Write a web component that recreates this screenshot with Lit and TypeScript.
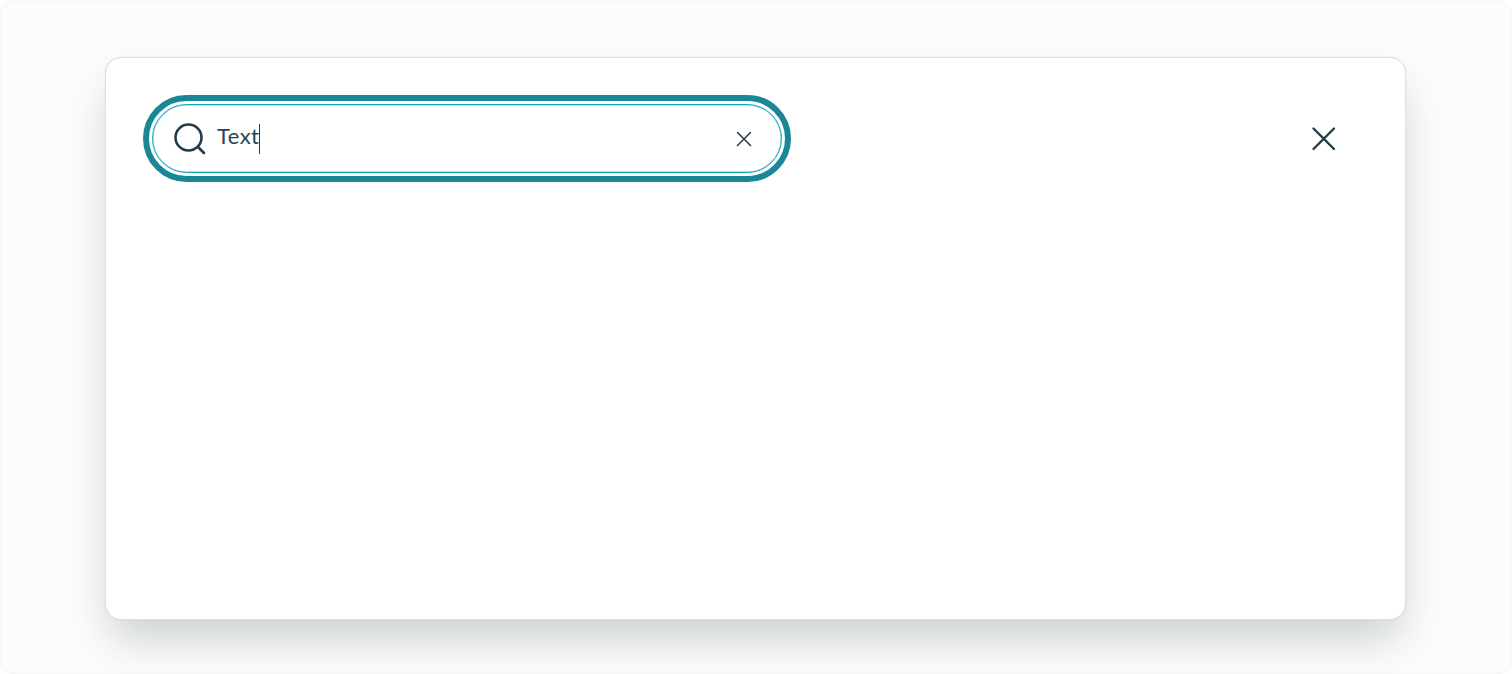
import { LitElement, html, css } from "lit";
import { customElement } from "lit/decorators.js";

@customElement("app-root")
export class AppRoot extends LitElement {
  static styles = css`
    :host { display: block; width: 1512px; height: 674px; }
    .frame {
      box-sizing: border-box; width: 1512px; height: 674px; overflow: hidden;
      background: #fcfcfc; border: 1px solid #f5f6f6; border-radius: 12px;
      padding: 56px 105px 0 104px;
    }
    .card {
      box-sizing: border-box; height: 563px; background: #fff;
      border: 1px solid #dce2e5; border-radius: 16px;
      box-shadow: 0 0 1px rgba(190, 200, 205, 0.7), 0 24px 44px -6px rgba(45, 65, 70, 0.24);
      padding: 37px 0 0 37px;
      display: flex; align-items: flex-start;
    }
    .ring {
      box-sizing: border-box; width: 648px; height: 87px; padding: 3px;
      border: 6px solid #1b8796; border-radius: 44px; background: #fff;
    }
    .field {
      box-sizing: border-box; height: 69px; border: 1px solid #0fa5bb; border-radius: 35px;
      box-shadow: inset 0 0 0 0.5px rgba(15, 165, 187, 0.6);
      display: flex; align-items: center; padding: 0 28px 0 20px;
      font-family: "Lato", "Noto Sans", sans-serif; font-size: 22px; font-weight: 400; color: #2a4450;
    }
    svg { display: block; fill: none; stroke: #213c48; stroke-linecap: round; flex: none; }
    .search { margin-right: 10px; }
    .value { position: relative; top: -3px; letter-spacing: 0.45px; line-height: 30px; }
    .caret { width: 1px; height: 30px; background: #213c48; flex: none; }
    .grow { flex: 1; }
    .close { margin-left: 520px; margin-top: 31px; }
  `;

  render() {
    return html`
      <div class="frame">
        <div class="card">
          <div class="ring">
            <div class="field">
              <svg class="search" width="34" height="34" viewBox="0 0 34 34" stroke-width="2.6">
                <circle cx="15.5" cy="15.5" r="13" />
                <path d="M25.5 25.5 31 31" />
              </svg>
              <span class="value">Text</span><span class="caret"></span>
              <span class="grow"></span>
              <svg width="18" height="18" viewBox="0 0 18 18" stroke-width="1.5">
                <path d="M2.5 2.5 15.5 15.5M15.5 2.5 2.5 15.5" />
              </svg>
            </div>
          </div>
          <svg class="close" width="26" height="26" viewBox="0 0 26 26" stroke-width="2.4">
            <path d="M2.5 2.5 23 23M23 2.5 2.5 23" />
          </svg>
        </div>
      </div>
    `;
  }
}
